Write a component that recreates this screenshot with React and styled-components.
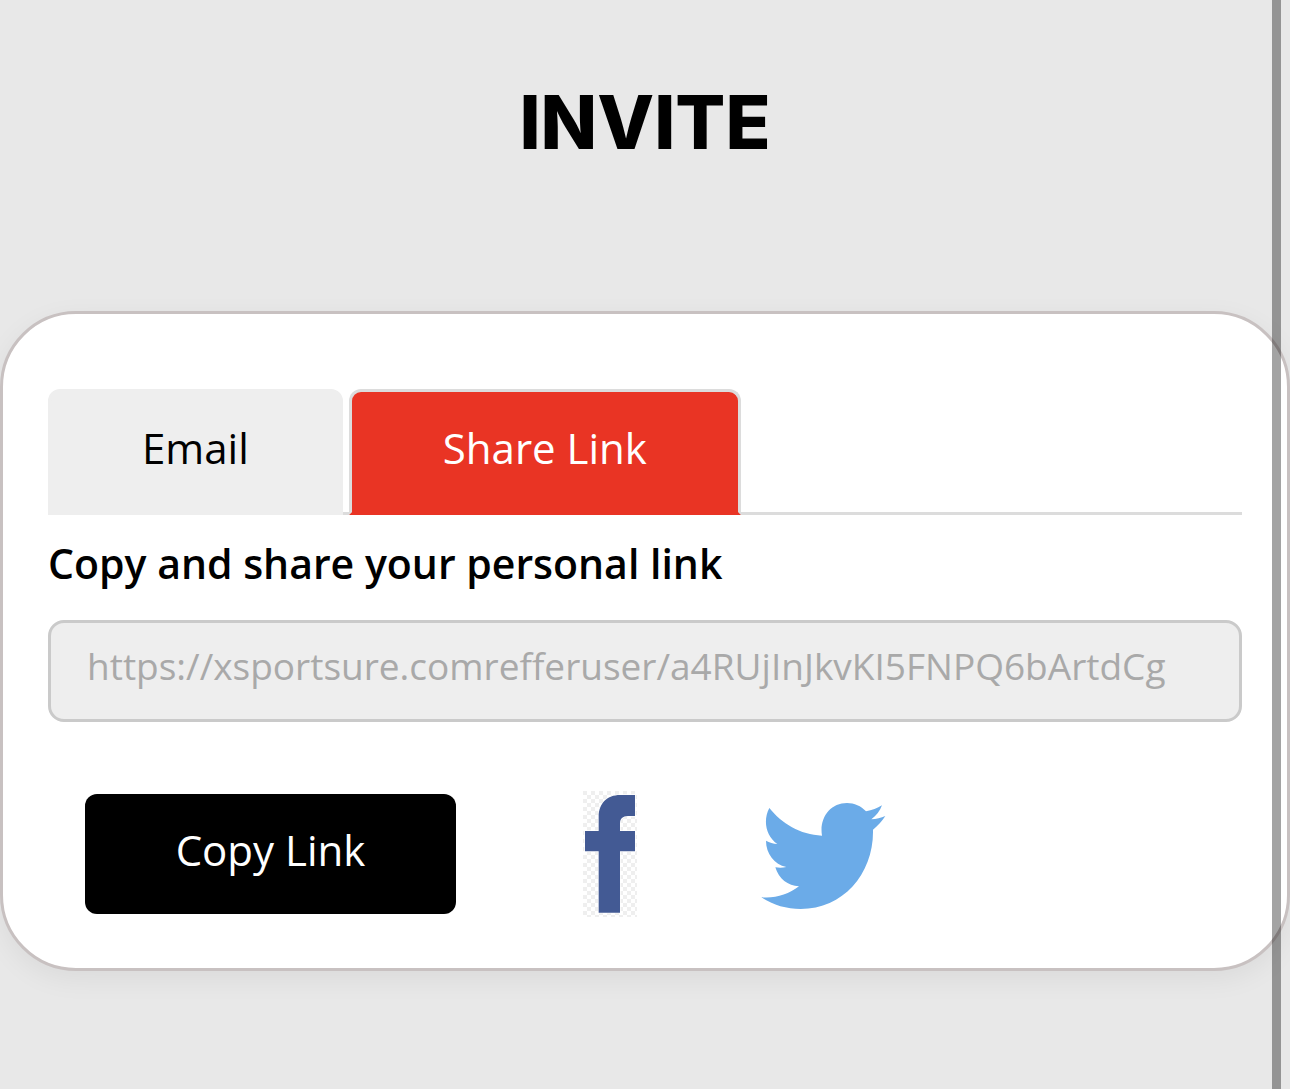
import React, { useState } from "react";
import styled, { createGlobalStyle } from "styled-components";

const GlobalStyle = createGlobalStyle`
  *, *::before, *::after { box-sizing: border-box; }
  html { scrollbar-width: none; }
  body {
    margin: 0;
    min-height: 100vh;
    background: #e8e8e8;
    color: #000;
    font-family: "Open Sans", "Noto Sans", sans-serif;
  }
`;

const Page = styled.main`
  padding-bottom: 118px;
`;

const Title = styled.h1`
  margin: 0;
  padding: 72px 24px 139px;
  font-family: Inter, "Open Sans", sans-serif;
  font-size: 74px;
  line-height: 100px;
  font-weight: 800;
  text-align: center;
`;

const Card = styled.section`
  padding: 75px 45px 51px;
  background: #fff;
  border: 3px solid #c8c1c1;
  border-radius: 76px;
  box-shadow: 0 8px 28px rgba(0, 0, 0, 0.06);
`;

const Tabs = styled.div`
  display: flex;
  gap: 6px;
  box-shadow: inset 0 -3px 0 #dcdcdc;
`;

const Tab = styled.button`
  height: 126px;
  padding: 0 91px 8px;
  border: 3px solid ${(p) => (p.$active ? "#dcdcdc" : "#eee")};
  border-bottom-color: ${(p) => (p.$active ? "#e93424" : "#eee")};
  border-radius: 12px 12px 0 0;
  background: ${(p) => (p.$active ? "#e93424" : "#eee")};
  color: ${(p) => (p.$active ? "#fff" : "#000")};
  font: 400 42px/58px "Open Sans", "Noto Sans", sans-serif;
  white-space: nowrap;
  cursor: pointer;
`;

const Panel = styled.div`
  display: flex;
  flex-direction: column;
  padding-top: 19px;
`;

const Label = styled.label`
  font-size: 41px;
  line-height: 58px;
  font-weight: 600;
`;

const LinkField = styled.input`
  width: 100%;
  height: 102px;
  margin-top: 28px;
  padding: 0 36px 12px;
  border: 3px solid #cacaca;
  border-radius: 16px;
  background: #eee;
  color: #a9a9a9;
  font: 400 37px/50px "Open Sans", "Noto Sans", sans-serif;
  text-overflow: ellipsis;
`;

const Actions = styled.div`
  display: flex;
  align-items: center;
  padding: 69px 37px 0;
`;

const CopyButton = styled.button`
  height: 120px;
  width: 371px;
  padding: 0 0 8px;
  border: 0;
  border-radius: 12px;
  background: #000;
  color: #fff;
  font: 400 42px/58px "Open Sans", "Noto Sans", sans-serif;
  cursor: pointer;
`;

const SocialLinks = styled.nav`
  display: flex;
  align-items: center;
  gap: 124px;
  margin-left: 127px;
`;

const SocialLink = styled.a`
  display: block;

  svg { display: block; }
`;

const ScrollThumb = styled.div`
  position: fixed;
  top: 0;
  right: 9px;
  bottom: 0;
  width: 9px;
  background: rgba(0, 0, 0, 0.36);
  pointer-events: none;
`;

function FacebookIcon() {
  return (
    <svg width="54" height="126" viewBox="0 0 162 378" aria-hidden="true">
      <defs>
        <pattern id="checks" width="24" height="24" patternUnits="userSpaceOnUse">
          <rect width="24" height="24" fill="#fff" />
          <rect width="12" height="12" fill="#efefef" />
          <rect x="12" y="12" width="12" height="12" fill="#efefef" />
        </pattern>
      </defs>
      <rect width="162" height="378" fill="url(#checks)" />
      <path
        d="M47 365V181H6V120H47V77C47 37 73 12 111 12H156V75H135C119 75 111 84 111 97V120H156V181H111V365Z"
        fill="#435a94"
        stroke="#fff"
        strokeWidth="4"
        paintOrder="stroke"
      />
    </svg>
  );
}

function TwitterIcon() {
  return (
    <svg width="125" height="110" viewBox="33 27 375 330" aria-hidden="true">
      <path
        d="M58 54C95 100 150 134 216 137C207 84 241 39 291 39C313 39 333 48 348 64C366 61 382 54 396 46C390 63 379 77 364 88C379 87 393 83 406 78C396 94 384 107 369 119C372 250 280 357 152 357C110 357 68 345 34 322C75 326 115 314 147 289C114 288 86 266 76 232C87 234 98 234 109 231C73 223 48 191 48 152C58 158 70 161 82 162C48 138 38 92 58 54Z"
        fill="#6babe8"
      />
    </svg>
  );
}

const SHARE_URL = "https://xsportsure.comrefferuser/a4RUjInJkvKI5FNPQ6bArtdCg";

export default function App() {
  const [tab, setTab] = useState("share");
  return (
    <>
      <GlobalStyle />
      <Page>
        <Title>INVITE</Title>
        <Card>
          <Tabs role="tablist">
            <Tab role="tab" aria-selected={tab === "email"} $active={tab === "email"} onClick={() => setTab("email")}>
              Email
            </Tab>
            <Tab role="tab" aria-selected={tab === "share"} $active={tab === "share"} onClick={() => setTab("share")}>
              Share Link
            </Tab>
          </Tabs>
          <Panel role="tabpanel">
            <Label htmlFor="personal-link">Copy and share your personal link</Label>
            <LinkField id="personal-link" type="text" readOnly value={SHARE_URL} />
            <Actions>
              <CopyButton type="button">Copy Link</CopyButton>
              <SocialLinks>
                <SocialLink href="#facebook" aria-label="Facebook">
                  <FacebookIcon />
                </SocialLink>
                <SocialLink href="#twitter" aria-label="Twitter">
                  <TwitterIcon />
                </SocialLink>
              </SocialLinks>
            </Actions>
          </Panel>
        </Card>
      </Page>
      <ScrollThumb />
    </>
  );
}
